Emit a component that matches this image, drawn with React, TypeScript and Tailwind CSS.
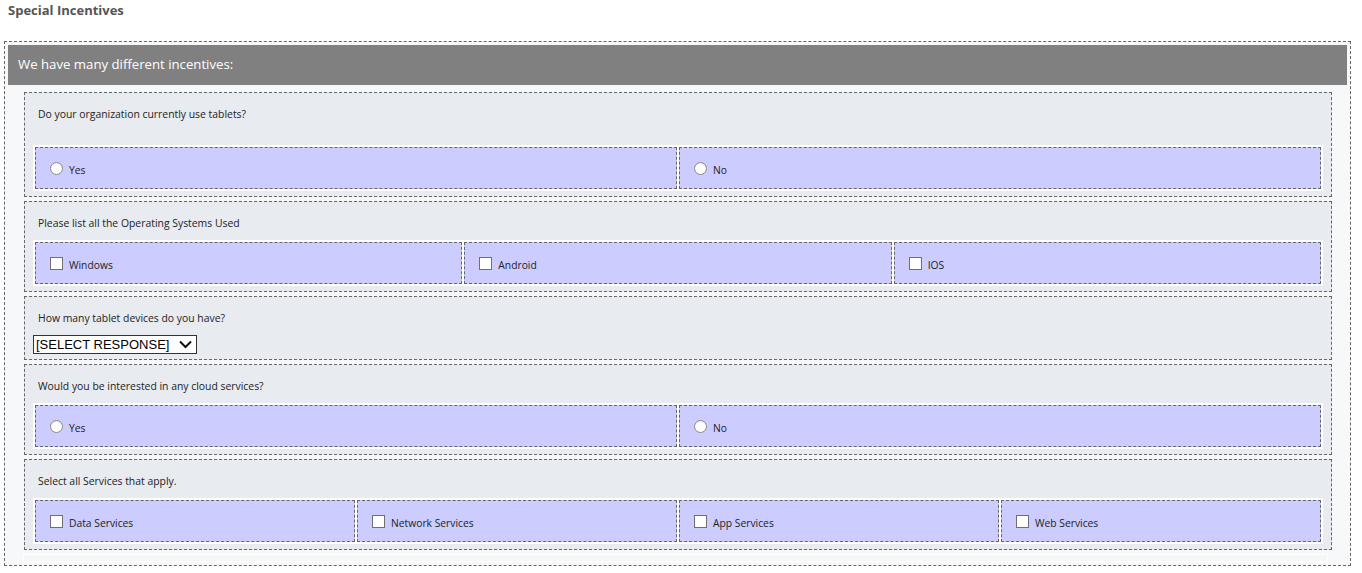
import React from "react";

const sans = "font-['Segoe_UI','Open_Sans',sans-serif]";

type Kind = "radio" | "check";

function Mark({ kind }: { kind: Kind }) {
  if (kind === "radio") {
    return (
      <span className="block w-[13px] h-[13px] rounded-full border border-[#8a8a8a] bg-white shadow-[inset_0_1px_1px_rgba(0,0,0,0.08)]" />
    );
  }
  return <span className="block w-[13px] h-[13px] border border-[#707070] bg-white" />;
}

function OptionRow({ kind, labels }: { kind: Kind; labels: string[] }) {
  return (
    <div className="flex gap-[2px] p-[2px] bg-white">
      {labels.map((label) => (
        <div
          key={label}
          className="flex-1 h-[42px] flex items-center pl-[14px] border border-dashed border-[#666] bg-[#ccccff]"
        >
          <Mark kind={kind} />
          <span className="ml-[6px] mt-[3px] text-[10.3px] leading-[14px] text-[#222]">{label}</span>
        </div>
      ))}
    </div>
  );
}

function Question({
  text,
  children,
  gap = "mt-[10px]",
}: {
  text: string;
  children: React.ReactNode;
  gap?: string;
}) {
  return (
    <div className="border border-dashed border-[#666] bg-[#e8ebf0] px-[8px] pt-[14px] pb-[5px]">
      <p className="pl-[5px] text-[10.4px] leading-[14px] text-[#222]">{text}</p>
      <div className={gap}>{children}</div>
    </div>
  );
}

export default function App() {
  return (
    <div className={`min-h-screen bg-white ${sans}`}>
      <div className="h-[41px] pl-[8px] pt-[2px]">
        <h1 className="text-[13px] leading-[16px] font-bold text-[#555]">Special Incentives</h1>
      </div>

      <div className="ml-[4px] w-[1347px] border border-dashed border-[#666] bg-[#f7f8fa] p-[3px]">
        <div className="h-[40px] bg-[#808080] flex items-center pl-[10px]">
          <span className="text-[13.2px] text-white">We have many different incentives:</span>
        </div>

        <div className="pt-[7px] pl-[16px] pr-[15px] flex flex-col gap-[4px]">
          <Question text="Do your organization currently use tablets?" gap="mt-[24px]">
            <OptionRow kind="radio" labels={["Yes", "No"]} />
          </Question>

          <Question text="Please list all the Operating Systems Used">
            <OptionRow kind="check" labels={["Windows", "Android", "IOS"]} />
          </Question>

          <Question text="How many tablet devices do you have?">
            <div className="w-[164px] h-[19px] border border-[#333] bg-white flex items-center pl-[2px] pr-[3px] justify-between">
              <span className="whitespace-nowrap font-['Liberation_Sans',Arial,sans-serif] text-[13px] leading-[16px] text-black">
                [SELECT RESPONSE]
              </span>
              <svg width="13" height="9" viewBox="0 0 13 9" className="mr-[1px] shrink-0">
                <path d="M1 1.5 L6.5 7 L12 1.5" fill="none" stroke="#111" strokeWidth="2" />
              </svg>
            </div>
          </Question>

          <Question text="Would you be interested in any cloud services?">
            <OptionRow kind="radio" labels={["Yes", "No"]} />
          </Question>

          <Question text="Select all Services that apply.">
            <OptionRow
              kind="check"
              labels={["Data Services", "Network Services", "App Services", "Web Services"]}
            />
          </Question>

          <div className="h-[8px] -ml-[1px] mr-[4px] border border-white bg-[#f5f6f8]" />
        </div>
      </div>
    </div>
  );
}
